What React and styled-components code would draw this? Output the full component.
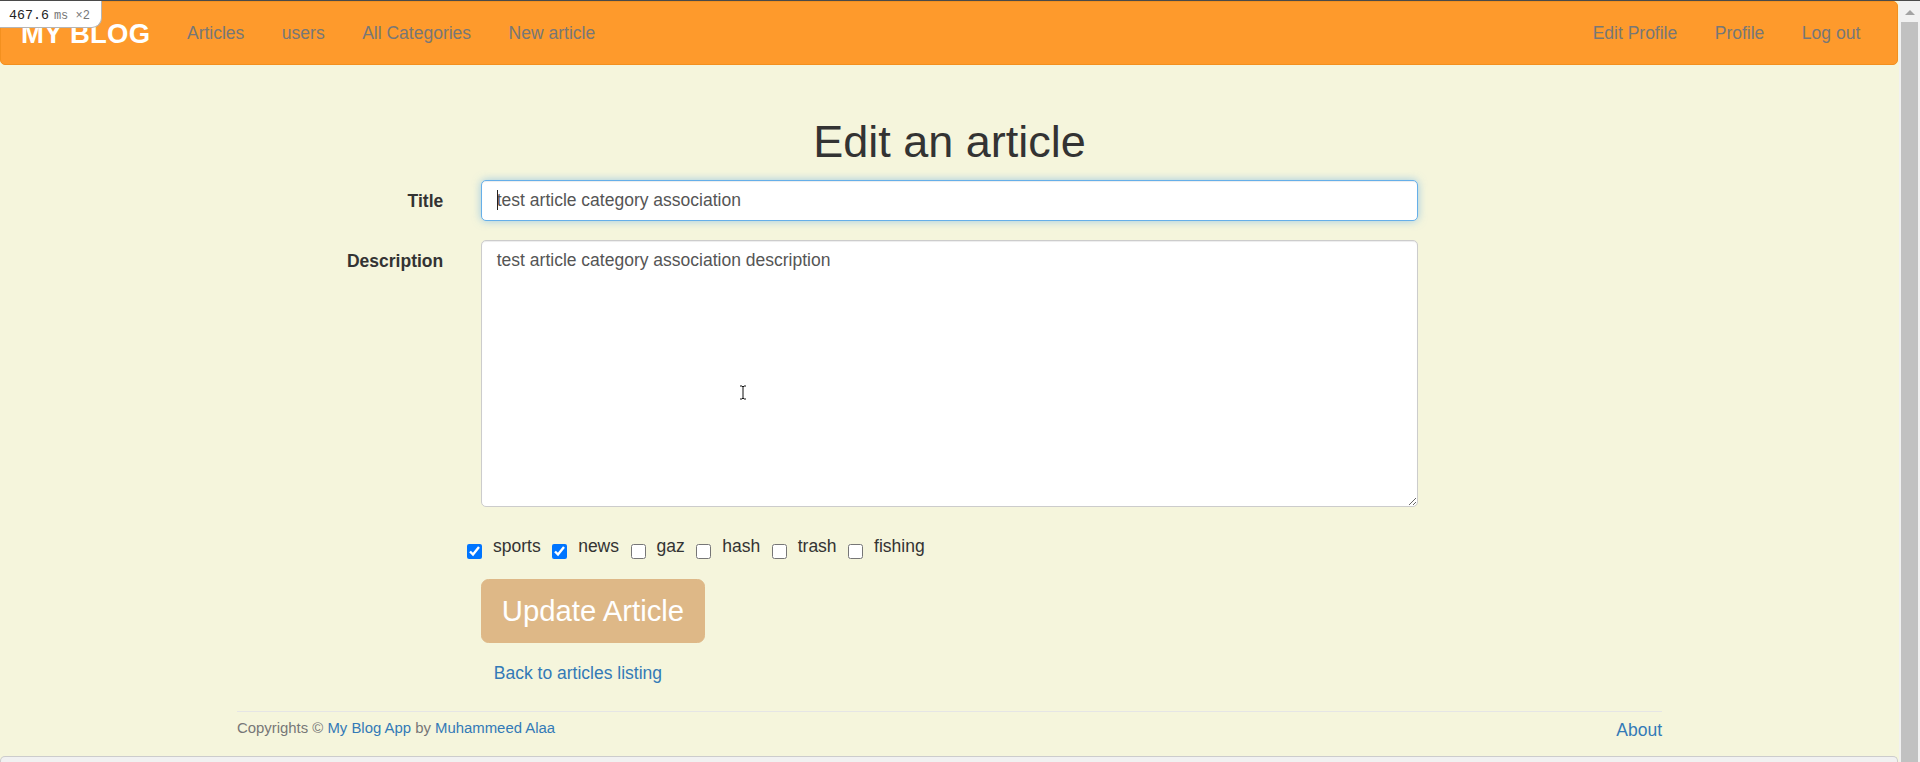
import React from 'react';
import styled, { createGlobalStyle } from 'styled-components';

const GlobalStyle = createGlobalStyle`
  html, body {
    margin: 0;
    padding: 0;
    overflow: hidden;
    background: #f5f5dc;
  }
  body {
    font-family: "Liberation Sans", Arial, sans-serif;
    font-size: 17.5px;
    line-height: 25px;
    color: #333;
  }
  * { box-sizing: border-box; }
`

const Window = styled.div`
  display: flex;
  width: 1920px;
  height: 762px;
  border-top: 1px solid #4a4a4a;
  overflow: hidden;
`

const Main = styled.div`
  position: relative;
  width: 1899px;
  display: flex;
  flex-direction: column;
  background: #f5f5dc;
`

const ScrollTrack = styled.div`
  width: 21px;
  background: #f1f1f1;
  display: flex;
  flex-direction: column;
  align-items: center;
`

const ScrollArrow = styled.div`
  margin-top: 9px;
  width: 0;
  height: 0;
  border-left: 5px solid transparent;
  border-right: 5px solid transparent;
  border-bottom: 5px solid #a3a3a3;
`

const ScrollThumb = styled.div`
  margin-top: 7px;
  width: 17px;
  flex: 1;
  background: #c1c1c1;
`

/* profiler badge sitting over the navbar */
const Badge = styled.div`
  position: absolute;
  top: 0;
  left: 0;
  width: 102px;
  height: 27px;
  background: #fff;
  border: 1px solid #b5b5b5;
  border-top: none;
  border-left: none;
  border-radius: 0 0 10px 0;
  padding-left: 9px;
  display: flex;
  align-items: baseline;
  padding-top: 2px;
  font-family: "Liberation Mono", "DejaVu Sans Mono", monospace;
  z-index: 5;
`

const BadgeTime = styled.span`
  font-size: 13.3px;
  color: #222;
`

const BadgeUnit = styled.span`
  font-size: 12px;
  color: #777;
  margin-left: 5px;
  white-space: pre;
`

const Navbar = styled.nav`
  height: 64px;
  margin-right: 1px;
  background: #fe9a2c;
  border: 1px solid #f3901f;
  border-radius: 5px;
  display: flex;
  align-items: center;
  padding: 0 18px 0 20px;
`

const Brand = styled.a`
  font-size: 27.5px;
  font-weight: bold;
  color: #fff;
  text-decoration: none;
  margin-right: 18px;
  letter-spacing: 0.2px;
`

const NavGroup = styled.div`
  display: flex;
  margin-left: ${p => (p.$right ? 'auto' : '0')};
`

const NavLink = styled.a`
  padding: 0 18.75px;
  color: #777;
  font-size: 17.5px;
  text-decoration: none;
  line-height: 25px;
`

const Container = styled.div`
  width: 1462.5px;
  margin: 0 auto;
  padding: 0 18.75px;
`

const Heading = styled.h1`
  margin: 51.5px 0 14px;
  text-align: center;
  font-size: 45px;
  line-height: 49.5px;
  font-weight: 500;
  color: #333;
`

const FormGroup = styled.div`
  display: grid;
  grid-template-columns: 206.25px 937.5px;
  column-gap: 37.5px;
  margin-bottom: 18.75px;
`

const Label = styled.label`
  text-align: right;
  font-weight: bold;
  padding-top: 8.75px;
  color: #333;
`

const Field = styled.div`
  position: relative;
`

const TextInput = styled.input`
  display: block;
  width: 100%;
  height: 41px;
  padding: 7.5px 15px;
  font-family: inherit;
  font-size: 17.5px;
  color: #555;
  background: #fff;
  border: 1px solid ${p => (p.$focused ? '#66afe9' : '#ccc')};
  border-radius: 5px;
  outline: none;
  box-shadow: ${p =>
    p.$focused
      ? 'inset 0 1px 1px rgba(0,0,0,.075), 0 0 8px rgba(102,175,233,.6)'
      : 'inset 0 1px 1px rgba(0,0,0,.075)'};
`

const Caret = styled.span`
  position: absolute;
  left: 16px;
  top: 10px;
  width: 1px;
  height: 20px;
  background: #222;
`

const TextArea = styled.textarea`
  display: block;
  width: 100%;
  height: 267px;
  padding: 7.5px 15px;
  font-family: inherit;
  font-size: 17.5px;
  line-height: 25px;
  color: #555;
  background: #fff;
  border: 1px solid #ccc;
  border-radius: 5px;
  outline: none;
  box-shadow: inset 0 1px 1px rgba(0,0,0,.075);
`

const Pointer = styled.svg`
  position: absolute;
  left: 258px;
  top: 145px;
  pointer-events: none;
`

const CheckRow = styled.div`
  display: flex;
  align-items: flex-start;
  margin-top: 27px;
  padding-left: 230px;
`

const CheckItem = styled.div`
  display: flex;
  align-items: flex-start;
  margin-right: 11.5px;
`

const Check = styled.input`
  width: 15px;
  height: 15px;
  margin: 10px 11px 0 0;
`

const CheckLabel = styled.span`
  font-size: 17.5px;
  line-height: 25px;
  color: #333;
`

const Actions = styled.div`
  padding-left: 243.75px;
`

const UpdateButton = styled.button`
  display: block;
  margin-top: 20px;
  height: 64px;
  padding: 0 20px;
  background: #deb887;
  color: #fff;
  border: 1px solid #deb887;
  border-radius: 7.5px;
  font-family: inherit;
  font-size: 29.3px;
`

const BackLink = styled.a`
  display: inline-block;
  margin: 18px 0 0 13px;
  color: #337ab7;
  text-decoration: none;
`

const Footer = styled.footer`
  margin-top: 25.5px;
  border-top: 1px solid #e5e5e5;
  display: flex;
  justify-content: space-between;
  align-items: flex-start;
`

const Copy = styled.small`
  font-size: 14.9px;
  color: #777;
  padding-top: 4px;
`

const FootLink = styled.a`
  color: #337ab7;
  text-decoration: none;
`

const AboutLink = styled(FootLink)`
  font-size: 17.5px;
  padding-top: 6px;
`

const BottomBar = styled.div`
  margin-top: auto;
  height: 6px;
  background: #f1f1f1;
  border: 1px solid #ccc;
  border-bottom: none;
  border-radius: 5px 5px 0 0;
  margin-right: 1px;
`

const categories = [
  { name: 'sports', checked: true },
  { name: 'news', checked: true },
  { name: 'gaz', checked: false },
  { name: 'hash', checked: false },
  { name: 'trash', checked: false },
  { name: 'fishing', checked: false },
];

export default function App() {
  return (
    <>
      <GlobalStyle />
      <Window>
        <Main>
          <Badge>
            <BadgeTime>467.6</BadgeTime>
            <BadgeUnit>ms ×2</BadgeUnit>
          </Badge>
          <Navbar>
            <Brand href="#">MY BLOG</Brand>
            <NavGroup>
              <NavLink href="#">Articles</NavLink>
              <NavLink href="#">users</NavLink>
              <NavLink href="#">All Categories</NavLink>
              <NavLink href="#">New article</NavLink>
            </NavGroup>
            <NavGroup $right>
              <NavLink href="#">Edit Profile</NavLink>
              <NavLink href="#">Profile</NavLink>
              <NavLink href="#">Log out</NavLink>
            </NavGroup>
          </Navbar>
          <Container>
            <Heading>Edit an article</Heading>
            <FormGroup>
              <Label>Title</Label>
              <Field>
                <TextInput $focused defaultValue="test article category association" />
                <Caret />
              </Field>
            </FormGroup>
            <FormGroup>
              <Label>Description</Label>
              <Field>
                <TextArea rows={10} defaultValue="test article category association description" />
                <Pointer width="8" height="15" viewBox="0 0 8 15">
                  <path d="M1 1h2l1 1 1-1h2M4 2v11M1 14h2l1-1 1 1h2" stroke="#111" strokeWidth="1" fill="none" />
                </Pointer>
              </Field>
            </FormGroup>
            <CheckRow>
              {categories.map(c => (
                <CheckItem key={c.name}>
                  <Check type="checkbox" defaultChecked={c.checked} />
                  <CheckLabel>{c.name}</CheckLabel>
                </CheckItem>
              ))}
            </CheckRow>
            <Actions>
              <UpdateButton>Update Article</UpdateButton>
              <BackLink href="#">Back to articles listing</BackLink>
            </Actions>
            <Footer>
              <Copy>
                Copyrights © <FootLink href="#">My Blog App</FootLink> by{' '}
                <FootLink href="#">Muhammeed Alaa</FootLink>
              </Copy>
              <AboutLink href="#">About</AboutLink>
            </Footer>
          </Container>
          <BottomBar />
        </Main>
        <ScrollTrack>
          <ScrollArrow />
          <ScrollThumb />
        </ScrollTrack>
      </Window>
    </>
  );
}
